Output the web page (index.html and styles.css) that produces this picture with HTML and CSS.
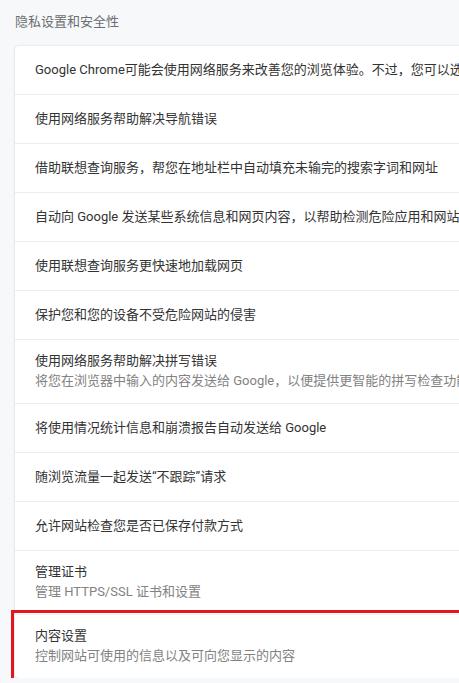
FILE: index.html
```html
<!DOCTYPE html>
<html lang="zh-CN">
<head>
<meta charset="UTF-8" />
<meta name="viewport" content="width=device-width, initial-scale=1" />
<title>隐私设置和安全性</title>
<link rel="stylesheet" href="styles.css">
</head>
<body>

<div class="settings-page">
  <h2 class="section-title">隐私设置和安全性</h2>

  <div class="card">
    <div class="row">
      <div class="row-label">Google Chrome可能会使用网络服务来改善您的浏览体验。不过，您可以选择停用这些服务。</div>
    </div>
    <div class="row">
      <div class="row-label">使用网络服务帮助解决导航错误</div>
    </div>
    <div class="row">
      <div class="row-label">借助联想查询服务，帮您在地址栏中自动填充未输完的搜索字词和网址</div>
    </div>
    <div class="row">
      <div class="row-label">自动向 Google 发送某些系统信息和网页内容，以帮助检测危险应用和网站</div>
    </div>
    <div class="row">
      <div class="row-label">使用联想查询服务更快速地加载网页</div>
    </div>
    <div class="row">
      <div class="row-label">保护您和您的设备不受危险网站的侵害</div>
    </div>
    <div class="row two-line">
      <div class="row-label">使用网络服务帮助解决拼写错误</div>
      <div class="row-sub">将您在浏览器中输入的内容发送给 Google，以便提供更智能的拼写检查功能</div>
    </div>
    <div class="row">
      <div class="row-label">将使用情况统计信息和崩溃报告自动发送给 Google</div>
    </div>
    <div class="row">
      <div class="row-label">随浏览流量一起发送“不跟踪”请求</div>
    </div>
    <div class="row">
      <div class="row-label">允许网站检查您是否已保存付款方式</div>
    </div>
    <div class="row two-line">
      <div class="row-label">管理证书</div>
      <div class="row-sub">管理 HTTPS/SSL 证书和设置</div>
    </div>
    <div class="row two-line highlighted">
      <div class="row-label">内容设置</div>
      <div class="row-sub">控制网站可使用的信息以及可向您显示的内容</div>
    </div>
  </div>
</div>

</body>
</html>
```

FILE: styles.css
```css
* {
  box-sizing: border-box;
}
body {
  margin: 0;
  background: #f7f8fa;
  font-family: Roboto, "Noto Sans CJK SC", sans-serif;
  font-size: 13px;
  color: #333;
  overflow: hidden;
}
.settings-page {
  width: 700px;
}
/* 标题 */
.section-title {
  margin: 0;
  padding: 12px 0 14px 15px;
  font-size: 13px;
  font-weight: normal;
  line-height: 20px;
  color: #6b6e73;
}
/* 卡片 */
.card {
  margin-left: 15px;
  background: #fff;
  border-radius: 4px;
  box-shadow: 0 0 2px rgba(60, 64, 67, 0.18), 0 1px 3px rgba(60, 64, 67, 0.08);
}
.row {
  min-height: 49px;
  padding: 0 20px;
  display: flex;
  flex-direction: column;
  justify-content: center;
  border-top: 1px solid #ececec;
  white-space: nowrap;
  line-height: 20px;
}
.row:first-child {
  min-height: 48px;
  border-top: none;
}
.row.two-line {
  padding: 11px 20px 12px;
}
.row-label {
  color: #333;
}
.row-sub {
  color: #828282;
}
/* 红框标注 */
.row.highlighted {
  outline: 3px solid #e3161d;
  outline-offset: 1px;
  position: relative;
}
```
